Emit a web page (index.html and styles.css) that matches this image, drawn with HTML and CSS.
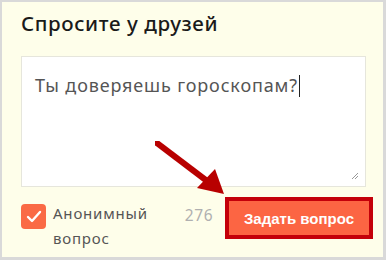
FILE: index.html
```html
<!DOCTYPE html>
<html lang="ru">
<head>
<meta charset="utf-8">
<link rel="stylesheet" href="styles.css">
</head>
<body>
<div class="card">
  <h1 class="title">Спросите у друзей</h1>
  <div class="textarea">
    <span class="text">Ты доверяешь гороскопам?</span><span class="caret"></span>
    <svg class="grip" width="10" height="10" viewBox="0 0 10 10"><path d="M9 3 L3 9 M9 6 L6 9" stroke="#999" stroke-width="1"/></svg>
  </div>
  <div class="footer">
    <label class="anon">
      <span class="check"><svg width="16" height="14" viewBox="0 0 16 14"><path d="M2 7 L6 11 L14 2" fill="none" stroke="#fff" stroke-width="2.4" stroke-linecap="round" stroke-linejoin="round"/></svg></span>
      <span class="anon-text">Анонимный<br>вопрос</span>
    </label>
    <span class="count">276</span>
    <button class="submit">Задать вопрос</button>
  </div>
  <svg class="arrow" width="80" height="60" viewBox="0 0 80 60">
    <path d="M2 2 L56 43" stroke="#b80000" stroke-width="6" stroke-linecap="round"/>
    <path d="M69 53 L42 47 L60 28 Z" fill="#b80000"/>
  </svg>
</div>
</body>
</html>
```
FILE: styles.css
```css
* { box-sizing: border-box; }
html, body { margin: 0; padding: 0; }
body { width: 386px; height: 260px; background: #d9d9d9; padding: 2px 3px 3px 2px; }
.card {
  position: relative;
  width: 381px; height: 255px;
  background: #fefeea;
  padding: 0 17px 0 19px;
  font-family: "Noto Sans", sans-serif;
}
.title {
  margin: 0;
  padding-top: 9px;
  font-size: 20.5px;
  font-weight: 500;
  color: #1a1a1a;
  line-height: 24px;
  letter-spacing: 0.6px;
}
.textarea {
  position: relative;
  margin-top: 21px;
  height: 131px;
  background: #fff;
  border: 1px solid #e6e6dc;
  padding: 16px 13px;
  font-size: 18px;
  color: #555;
  line-height: 24px;
  letter-spacing: 0.85px;
}
.caret { display: inline-block; width: 1px; height: 22px; background: #222; vertical-align: -5px; margin-left: 1px; }
.grip { position: absolute; right: 6px; bottom: 6px; }
.footer {
  display: flex;
  align-items: flex-start;
  margin-top: 10px;
}
.anon { display: flex; align-items: flex-start; gap: 7px; }
.check {
  width: 25px; height: 25px; border-radius: 4px;
  background: #fa6a45;
  display: flex; align-items: center; justify-content: center;
  margin-top: 7px;
}
.anon-text { font-size: 15px; line-height: 25px; color: #555; margin-top: 4px; letter-spacing: 0.8px; }
.count { font-size: 15.5px; color: #b0b0b0; margin-left: 37px; margin-top: 8px; line-height: 20px; letter-spacing: 0.6px; }
.submit {
  margin-left: auto;
  width: 148px; height: 42px;
  background: #fc6543;
  border: 4px solid #c4000a;
  color: #fff;
  font-family: "Liberation Sans", Arial, sans-serif;
  font-size: 15px;
  font-weight: 600;
  padding: 0;
  margin-right: -7px;
}
.arrow { position: absolute; left: 153px; top: 139px; }
```
